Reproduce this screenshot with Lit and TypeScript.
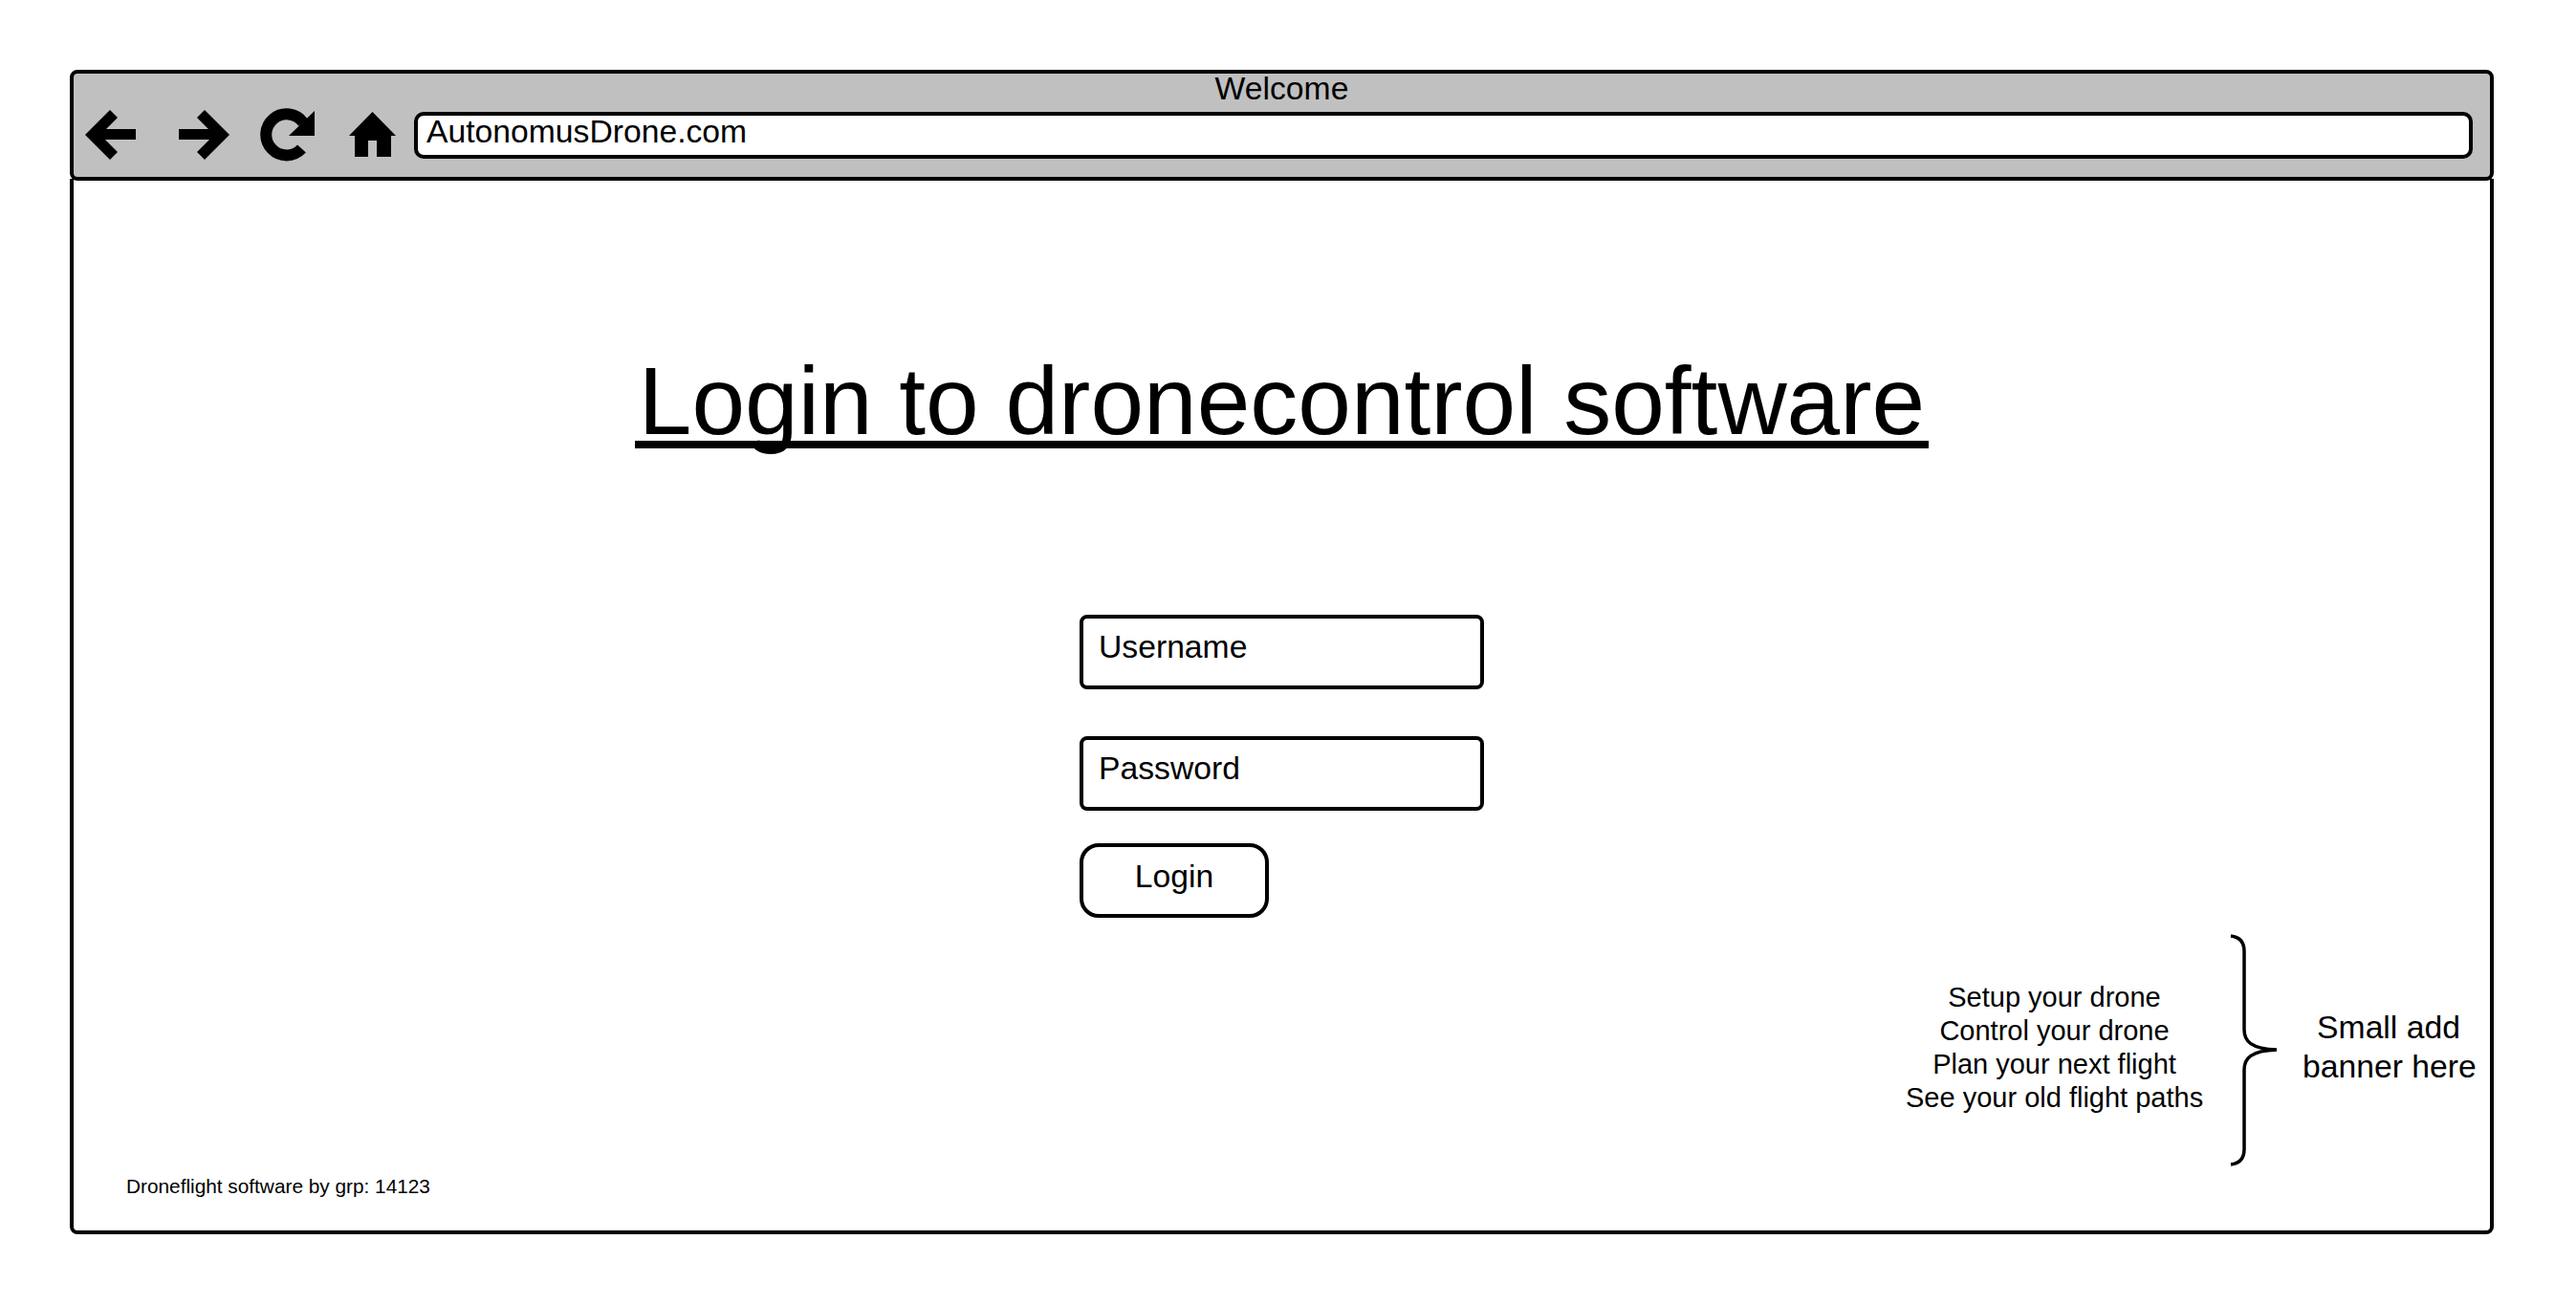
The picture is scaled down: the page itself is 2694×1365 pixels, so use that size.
import { css, html, LitElement } from "lit";
import { customElement } from "lit/decorators.js";

const FEATURES = ["Setup your drone", "Control your drone", "Plan your next flight", "See your old flight paths"];

@customElement("app-root")
export class AppRoot extends LitElement {
    render() {
        return html`
    <div class="window">
        <header class="chrome">
            <div class="page-title">Welcome</div>
            <div class="toolbar">
                <svg class="back" width="54" height="52" viewBox="29 56 54 52">
                    <polygon points="29,82 55,56 63,64 51,76 82,76 82,87 50,87 63,100 55,108"></polygon>
                </svg>
                <svg class="forward" width="54" height="52" viewBox="127 56 54 52">
                    <polygon points="180,82 154,56 146,64 158,76 127,76 127,87 159,87 146,100 154,108"></polygon>
                </svg>
                <svg class="reload" width="58" height="56" viewBox="212 54 58 56">
                    <path class="arc" d="M255.5 96.5A21.5 21.5 0 1 1 257.1 69.2"></path>
                    <polygon points="269,57 269,83 242,83"></polygon>
                </svg>
                <svg class="home" width="50" height="48" viewBox="305 58 50 48">
                    <path fill-rule="evenodd" d="M329.5 58L354 83H349V105H334V88H325V105H311V83H305Z"></path>
                </svg>
                <div class="address">AutonomusDrone.com</div>
            </div>
        </header>
        <main class="content">
            <h1 class="headline"><span class="headline-text">Login to dronecontrol software</span></h1>
            <div class="form">
                <div class="field">Username</div>
                <div class="field">Password</div>
                <div class="login">Login</div>
            </div>
            <div class="aside">
                <div class="features">${FEATURES.map((item) => html`<div>${item}</div>`)}</div>
                <svg class="brace" width="49" height="243" viewBox="0 0 49 243">
                    <path d="M1 2C10 3 15 8 15 18V100C15 112 22 120 49 121C22 122 15 130 15 142V225C15 235 10 240 1 241"></path>
                </svg>
                <div class="banner">Small add<br />banner here</div>
            </div>
            <footer class="credit">Droneflight software by grp: 14123</footer>
        </main>
    </div>
        `;
    }

    static styles = css`
        :host {
            display: block;
            padding: 73px 0 0 73px;
            font-family: "Liberation Sans", Arial, sans-serif;
            color: #000;
            background: #fff;
        }
        .window {
            width: 2535px;
            height: 1218px;
            display: flex;
            flex-direction: column;
        }
        .chrome {
            box-sizing: border-box;
            height: 115.5px;
            flex: none;
            background: #c0c0c0;
            border: 4px solid #000;
            border-radius: 8px;
        }
        .page-title {
            height: 30px;
            font-size: 33.7px;
            line-height: 30px;
            text-align: center;
        }
        .toolbar {
            height: 52px;
            margin-top: 8px;
            display: flex;
            align-items: center;
        }
        .toolbar svg {
            flex: none;
            fill: #000;
        }
        .back {
            margin-left: 12px;
        }
        .forward {
            margin-left: 44px;
        }
        .reload {
            margin-left: 31px;
        }
        .home {
            margin-left: 35px;
        }
        .arc {
            fill: none;
            stroke: #000;
            stroke-width: 12;
        }
        .address {
            box-sizing: border-box;
            flex: none;
            width: 2153px;
            height: 49px;
            margin-left: 18px;
            padding: 0 0 0 9px;
            background: #fff;
            border: 4px solid #000;
            border-radius: 10px;
            font-size: 33.7px;
            line-height: 32px;
        }
        .content {
            box-sizing: border-box;
            flex: 1;
            display: flex;
            flex-direction: column;
            margin-top: -2px;
            padding-top: 175.5px;
            border: 4px solid #000;
            border-top: none;
            border-radius: 0 0 8px 8px;
        }
        .headline {
            margin: 0;
            font-size: 100px;
            font-weight: 400;
            line-height: 115px;
            text-align: center;
        }
        .headline-text {
            display: inline-block;
            padding: 0 3.5px;
            background: linear-gradient(#000, #000) no-repeat 0 99px / 100% 8px;
        }
        .form {
            width: 423px;
            margin: 166px auto 0;
            display: flex;
            flex-direction: column;
            font-size: 33.7px;
        }
        .field {
            box-sizing: border-box;
            height: 78px;
            padding: 9px 0 0 16px;
            border: 4px solid #000;
            border-radius: 8px;
            line-height: 40px;
        }
        .field + .field {
            margin-top: 49px;
        }
        .login {
            box-sizing: border-box;
            width: 198px;
            height: 78px;
            margin-top: 34px;
            padding-top: 10px;
            border: 4px solid #000;
            border-radius: 20px;
            line-height: 40px;
            text-align: center;
        }
        .aside {
            height: 243px;
            margin-top: 17px;
            padding-right: 16px;
            display: flex;
            align-items: center;
            justify-content: flex-end;
        }
        .features {
            width: 311px;
            margin-right: 28px;
            margin-bottom: 5px;
            font-size: 29px;
            line-height: 35px;
            text-align: center;
            white-space: nowrap;
        }
        .brace {
            flex: none;
            fill: none;
            stroke: #000;
            stroke-width: 3.5;
        }
        .banner {
            width: 180px;
            margin-left: 27px;
            margin-bottom: 7px;
            font-size: 33.7px;
            line-height: 41px;
            text-align: center;
            white-space: nowrap;
        }
        .credit {
            margin-top: 4px;
            padding-left: 55px;
            font-size: 20.8px;
            line-height: 34px;
        }
    `;
}
